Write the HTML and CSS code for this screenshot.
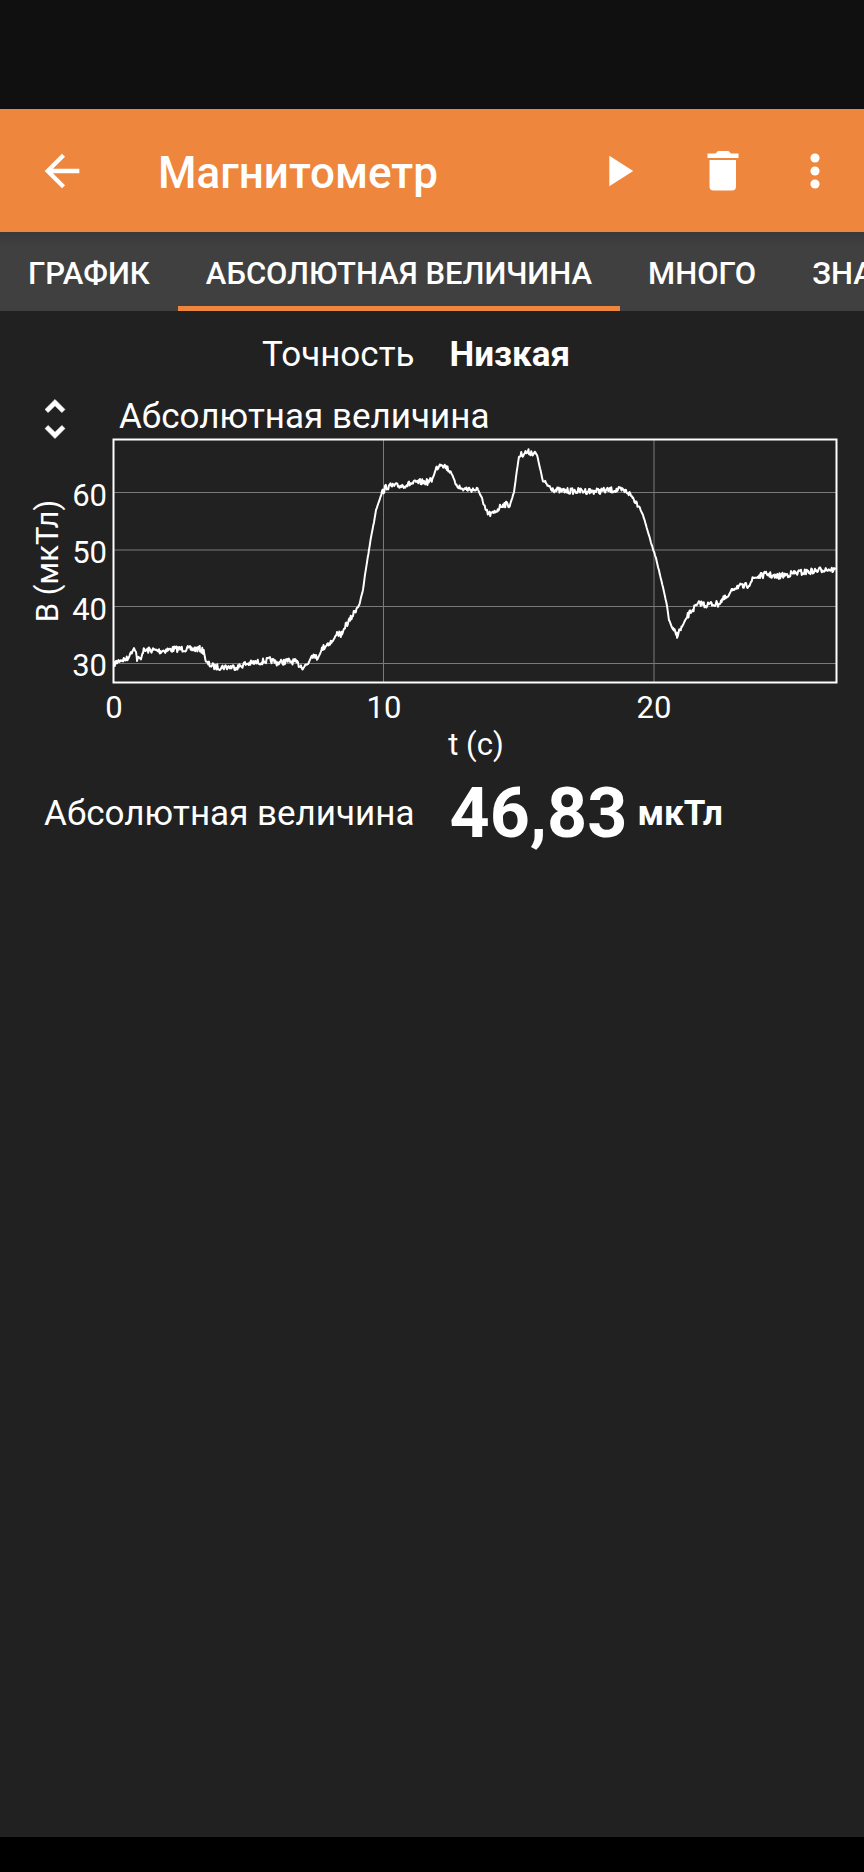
FILE: index.html
```html
<!DOCTYPE html>
<html lang="ru">
<head>
    <meta charset="UTF-8">
    <meta name="viewport" content="width=device-width, initial-scale=1.0">
    <title>Магнитометр</title>
    <link rel="stylesheet" href="styles.css">
</head>
<body>
    <div class="status-bar"></div>

    <header class="app-bar">
        <button class="icon-btn back" aria-label="Назад">
            <svg viewBox="0 0 24 24"><path d="M20 11H7.83l5.59-5.59L12 4l-8 8 8 8 1.41-1.41L7.83 13H20z"/></svg>
        </button>
        <h1 class="title">Магнитометр</h1>
        <button class="icon-btn" aria-label="Старт">
            <svg viewBox="0 0 24 24"><path d="M8 5v14l11-7z"/></svg>
        </button>
        <button class="icon-btn" aria-label="Удалить">
            <svg viewBox="0 0 52 52"><path d="M10.500 8.500h8l2.500-2.500h10.500l2.500 2.500h7.500v4.500H10.500zM12.500 15h26.500v26.500a4 4 0 0 1-4 4H16.500a4 4 0 0 1-4-4z"/></svg>
        </button>
        <button class="icon-btn more" aria-label="Меню">
            <svg viewBox="0 0 24 24"><circle cx="12" cy="6" r="2.1"/><circle cx="12" cy="12" r="2.1"/><circle cx="12" cy="18" r="2.1"/></svg>
        </button>
    </header>

    <nav class="tabs">
        <button class="tab">ГРАФИК</button>
        <button class="tab active">АБСОЛЮТНАЯ ВЕЛИЧИНА</button>
        <button class="tab">МНОГО</button>
        <button class="tab">ЗНАЧЕНИЯ</button>
    </nav>

    <main class="content">
        <div class="row">
            <span class="label">Точность</span>
            <span class="value">Низкая</span>
        </div>

        <section class="graph">
            <div class="graph-head">
                <button class="expand" aria-label="Развернуть">
                    <svg viewBox="0 0 24 24"><path d="M12 5.83L15.17 9l1.41-1.41L12 3 7.41 7.59 8.83 9 12 5.83zm0 12.34L8.83 15l-1.41 1.41L12 21l4.59-4.59L15.17 15 12 18.17z"/></svg>
                </button>
                <h2 class="graph-title">Абсолютная величина</h2>
            </div>
            <svg class="chart" viewBox="0 7 864 335">
                <g class="grid">
                    <path d="M114 62.5H837M114 120H837M114 176.5H837M114 233.5H837"/>
                    <path d="M383.5 9V252M654 9V252"/>
                </g>
                <polyline class="line" id="line" points=""/>
                <rect class="frame" x="113.5" y="9.5" width="723" height="243"/>
                <g class="ticks-y">
                    <text x="107" y="76">60</text>
                    <text x="107" y="133">50</text>
                    <text x="107" y="190">40</text>
                    <text x="107" y="246">30</text>
                </g>
                <g class="ticks-x">
                    <text x="114" y="288">0</text>
                    <text x="384" y="288">10</text>
                    <text x="654" y="288">20</text>
                    <text x="476" y="325">t (с)</text>
                    <text transform="translate(58 131) rotate(-90)">В (мкТл)</text>
                </g>
            </svg>
        </section>

        <div class="row">
            <span class="label">Абсолютная величина</span>
            <span class="value"><span class="big">46,83</span> <span class="unit">мкТл</span></span>
        </div>
    </main>

    <div class="nav-bar"></div>

    <script src="script.js"></script>
</body>
</html>
```

FILE: styles.css
```css
* {
    margin: 0;
    padding: 0;
    box-sizing: border-box;
}

body {
    font-family: Roboto, 'Noto Sans', sans-serif;
    display: flex;
    flex-direction: column;
    min-height: 100vh;
    background-color: #212121;
    color: white;
    overflow-x: hidden;
}

button {
    border: none;
    background: none;
    color: inherit;
    font: inherit;
    cursor: pointer;
}

svg {
    display: block;
    fill: white;
}

.status-bar {
    height: 109px;
    background-color: #101010;
}

.app-bar {
    display: flex;
    align-items: center;
    height: 123px;
    padding: 0 9px 0 36px;
    background-color: #ef863d;
}

.icon-btn {
    display: flex;
    justify-content: center;
    width: 105px;
    flex-shrink: 0;
}

.icon-btn svg {
    width: 52px;
    height: 52px;
}

.icon-btn.back {
    width: 52px;
}

.icon-btn.more {
    width: 80px;
}

.title {
    flex: 1;
    padding: 4px 0 0 70px;
    font-size: 44px;
    font-weight: 500;
}

.tabs {
    display: flex;
    height: 79px;
    overflow: hidden;
    background: linear-gradient(#3a3a3a, #404040 16px);
}

.tab {
    flex-shrink: 0;
    padding: 8px 28px 0;
    border-bottom: 5px solid transparent;
    font-size: 31px;
    font-weight: 500;
}

.tab.active {
    border-bottom-color: #ef863d;
}

.content {
    flex: 1;
    padding-top: 23px;
}

.row {
    display: flex;
    align-items: center;
    gap: 35px;
    font-size: 35px;
}

.label {
    flex: 1;
    text-align: right;
}

.value {
    flex: 1;
    display: flex;
    align-items: center;
    gap: 10px;
    font-weight: bold;
}

.big {
    font-size: 70px;
}

.graph {
    padding-top: 20px;
}

.graph-head {
    display: flex;
    align-items: center;
    height: 42px;
    padding-left: 29px;
}

.expand {
    padding-top: 6px;
}

.expand svg {
    width: 52px;
    height: 52px;
    stroke: white;
    stroke-width: 0.3;
}

.graph-title {
    padding-left: 38px;
    font-size: 35px;
    font-weight: normal;
}

.chart {
    width: 100%;
    font-size: 31px;
}

.grid {
    stroke: #7a7a7a;
    stroke-width: 1;
}

.frame {
    fill: none;
    stroke: white;
    stroke-width: 2;
}

.line {
    fill: none;
    stroke: white;
    stroke-width: 2;
    stroke-linejoin: round;
}

.ticks-y {
    text-anchor: end;
}

.ticks-x {
    text-anchor: middle;
}

.nav-bar {
    height: 35px;
    background-color: black;
}
```

FILE: script.js
```javascript
// Key points of the curve in chart coordinates
const points = [
    [114, 234], [120, 230], [128, 229], [131, 222], [134, 218], [136, 222], [137, 229], [141, 229],
    [143, 221], [150, 220], [160, 221], [175, 219], [190, 219], [200, 219], [204, 222], [206, 233],
    [215, 237], [230, 237], [238, 237], [245, 234], [260, 232], [270, 230], [278, 233], [288, 231],
    [295, 232], [303, 237], [308, 234], [312, 225], [316, 225], [317, 230], [322, 219], [327, 214],
    [333, 211], [337, 203], [342, 205], [345, 196], [350, 190], [355, 181], [360, 172], [363, 160],
    [365, 145], [367, 132], [369, 120], [371, 107], [374, 92], [376, 80], [379, 71], [382, 63],
    [386, 57], [392, 56], [400, 56], [410, 54], [420, 52], [428, 52], [432, 50], [436, 39],
    [441, 33], [446, 37], [451, 42], [455, 52], [461, 59], [467, 59], [478, 60], [482, 68],
    [484, 77], [488, 84], [493, 84], [497, 80], [503, 74], [510, 75], [514, 62], [516, 47],
    [519, 26], [524, 23], [529, 22], [534, 23], [537, 25], [540, 38], [543, 52], [549, 56],
    [555, 60], [563, 61], [570, 61], [580, 61], [590, 61], [600, 61], [612, 60], [620, 60],
    [628, 62], [633, 68], [639, 76], [643, 85], [648, 102], [652, 116], [656, 128], [660, 145],
    [664, 162], [667, 176], [669, 190], [673, 200], [677, 205], [682, 197], [687, 187], [692, 180],
    [700, 173], [705, 175], [712, 174], [718, 174], [722, 170], [728, 167], [732, 159], [738, 156],
    [743, 157], [748, 155], [754, 148], [760, 146], [768, 144], [775, 147], [785, 145], [795, 143],
    [806, 142], [815, 141], [825, 139], [836, 140]
];

// Small repeatable noise of the sensor
let seed = 7;
function noise() {
    seed = (seed * 16807) % 2147483647;
    return seed / 2147483647 - 0.5;
}

const out = [];
for (let i = 0; i < points.length - 1; i++) {
    const [x1, y1] = points[i];
    const [x2, y2] = points[i + 1];
    const slope = Math.abs((y2 - y1) / (x2 - x1));
    const amp = slope > 1.8 ? 1 : 6;
    for (let x = x1; x < x2; x += 0.75) {
        const y = y1 + (y2 - y1) * (x - x1) / (x2 - x1);
        out.push(x + ',' + (y + noise() * amp).toFixed(1));
    }
}
document.getElementById('line').setAttribute('points', out.join(' '));
```
